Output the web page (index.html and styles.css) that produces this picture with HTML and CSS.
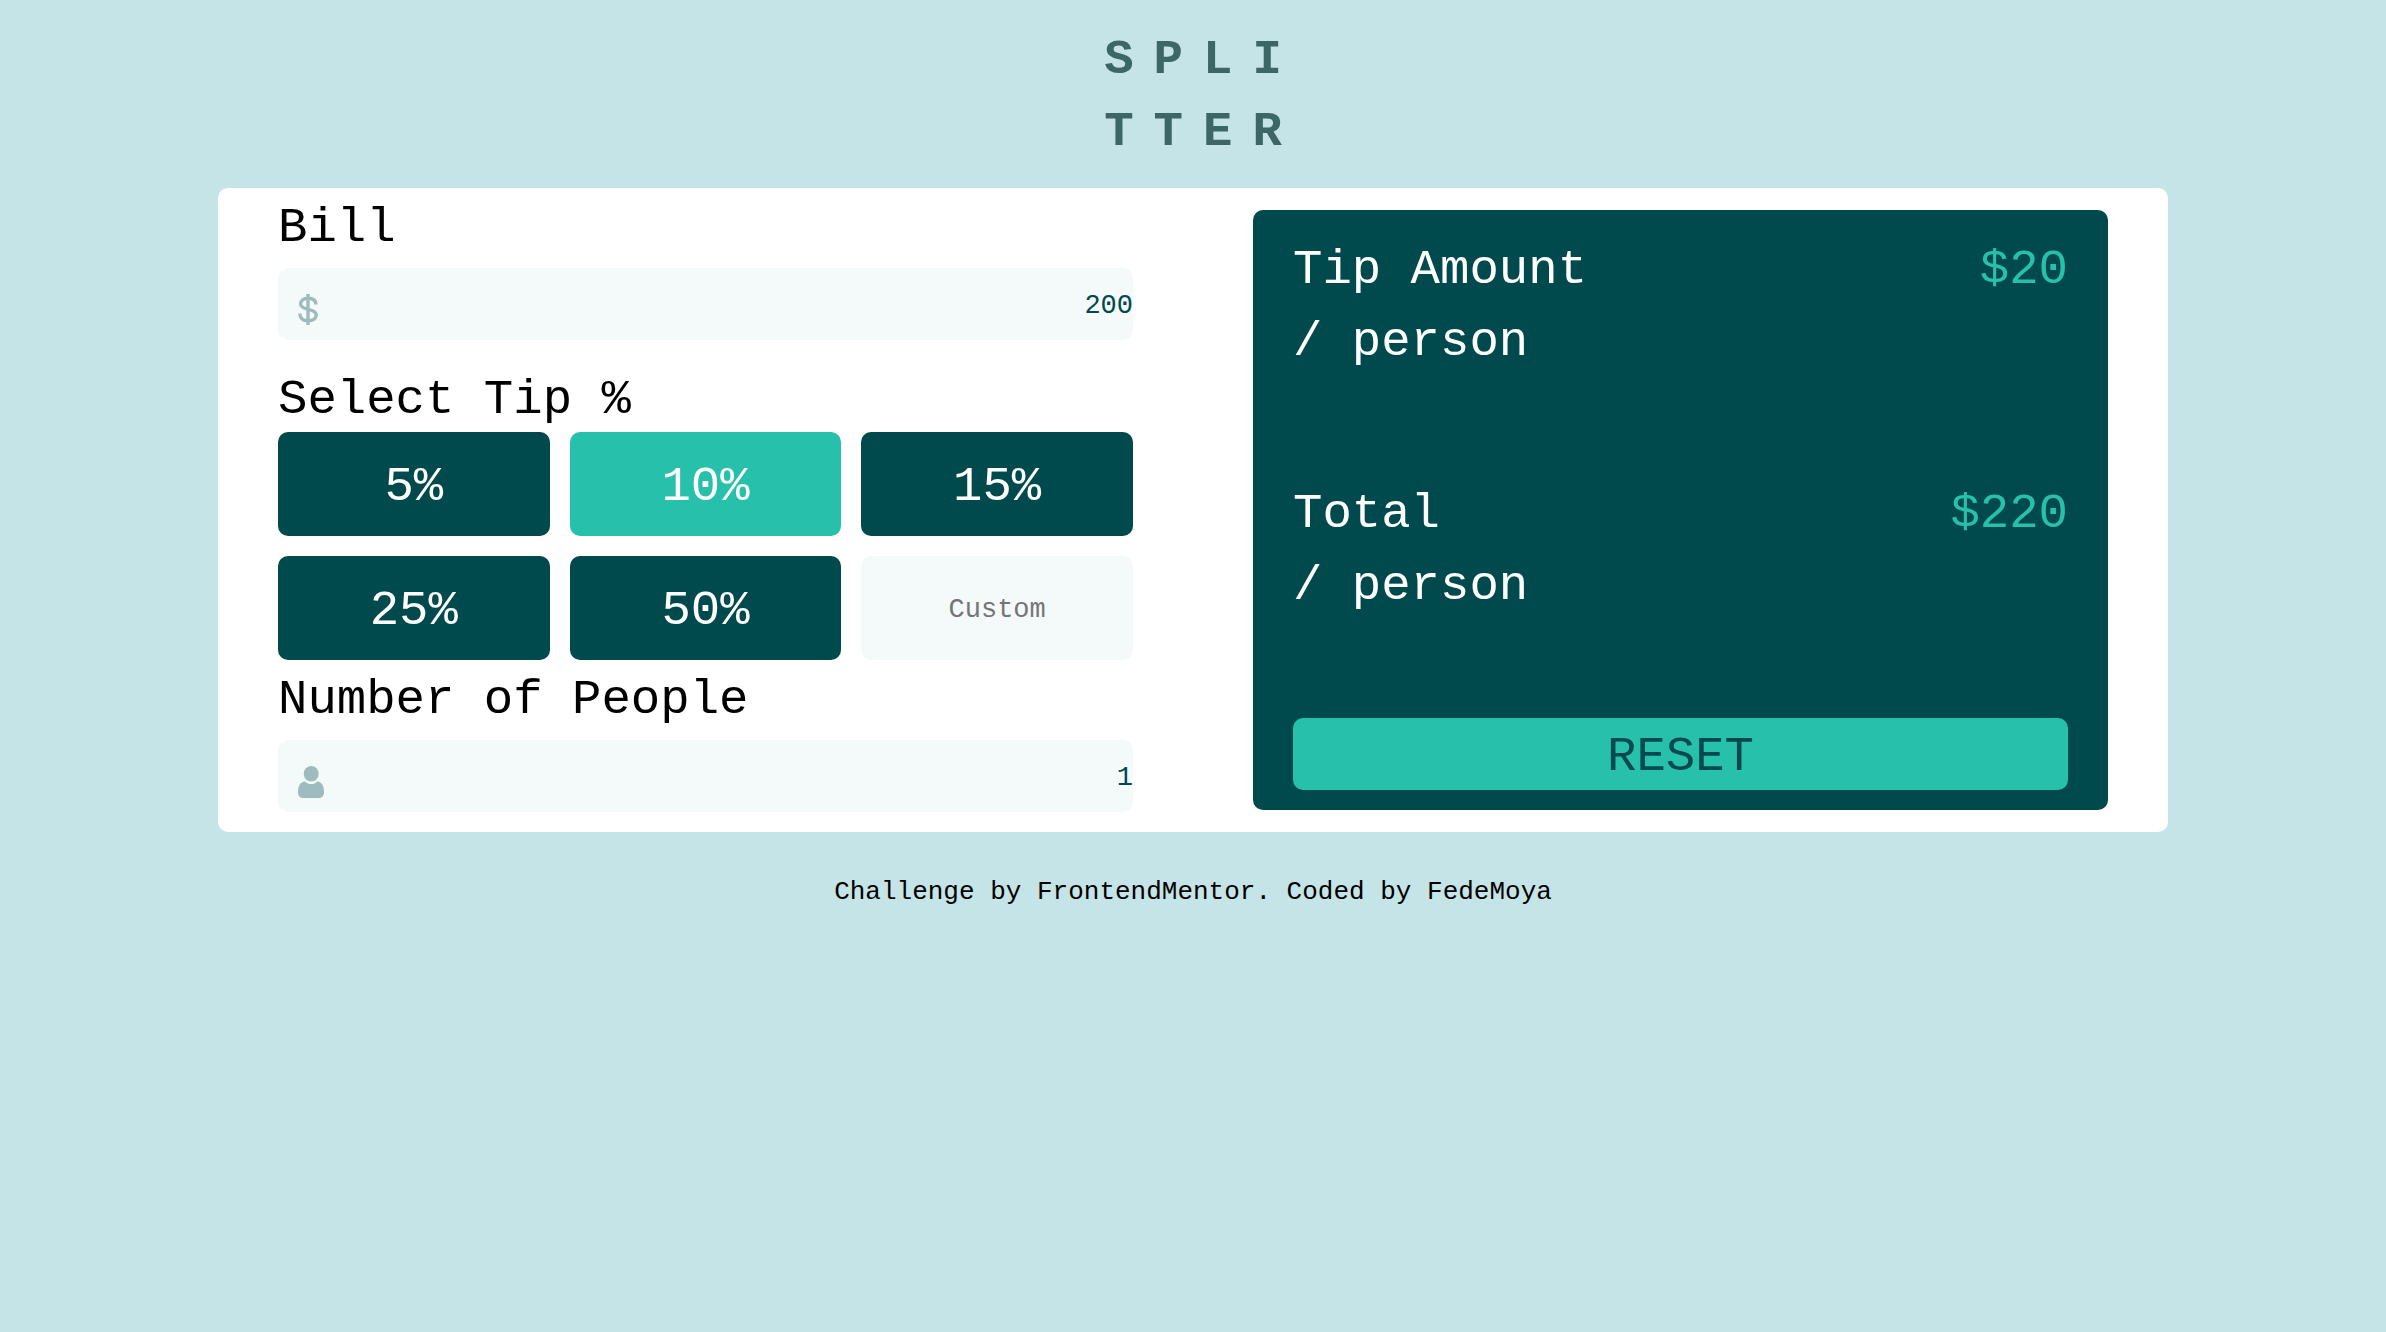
FILE: index.html
```html
<!DOCTYPE html>
<html lang="en">
<head>
<meta charset="utf-8">
<meta name="viewport" content="width=device-width, initial-scale=1">
<title>Splitter</title>
<link rel="stylesheet" href="styles.css">
</head>
<body>
<header class="header">
  <h1 class="logo">SPLI<br>TTER</h1>
</header>
<main class="card">
  <form class="form">
    <label class="label" for="bill">Bill</label>
    <div class="field">
      <svg class="icon" width="20" height="31" viewBox="0 0 20 31" aria-hidden="true"><path d="M10 0v31M18 10.500C17.800 6.500 15 4.300 10.200 4.300 5.500 4.300 2.600 6.600 2.600 9.800c0 3.200 2.400 4.500 7.600 5.500 5.600 1.100 8 2.500 8 5.800 0 3.400-3 5.700-8 5.700-5.200 0-8.300-2.600-8.400-7.300" fill="none" stroke="#9ebbbd" stroke-width="3.400"/></svg>
      <input class="input" id="bill" type="text" inputmode="decimal" value="200">
    </div>
    <fieldset class="tips">
      <legend class="label">Select Tip %</legend>
      <div class="grid">
        <button class="tip" type="button">5%</button>
        <button class="tip tip-active" type="button" aria-pressed="true">10%</button>
        <button class="tip" type="button">15%</button>
        <button class="tip" type="button">25%</button>
        <button class="tip" type="button">50%</button>
        <input class="custom" type="text" inputmode="numeric" placeholder="Custom" aria-label="Custom tip">
      </div>
    </fieldset>
    <label class="label" for="people">Number of People</label>
    <div class="field">
      <svg class="icon" width="26" height="32" viewBox="0 0 26 32" aria-hidden="true"><g fill="#9ebbbd"><ellipse cx="13.200" cy="7.700" rx="7.500" ry="7.700"/><path d="M7 15.500c2 1.800 4 2.600 6.200 2.600s4.300-.8 6.200-2.600c4.300.3 6.600 4.200 6.600 10.500 0 3.800-1.800 6-5 6H5c-3.200 0-5-2.200-5-6 0-6.300 2.600-10.200 7-10.500z"/></g></svg>
      <input class="input" id="people" type="text" inputmode="numeric" value="1">
    </div>
  </form>
  <section class="results">
    <div class="result">
      <p>Tip Amount<br>/ person</p>
      <output class="amount">$20</output>
    </div>
    <div class="result">
      <p>Total<br>/ person</p>
      <output class="amount">$220</output>
    </div>
    <button class="reset" type="button">RESET</button>
  </section>
</main>
<footer class="footer">Challenge by FrontendMentor. Coded by FedeMoya</footer>
</body>
</html>
```
FILE: styles.css
```css
* {
  box-sizing: border-box;
  margin: 0;
}

body {
  background: #c5e4e7;
  color: #000;
  font-family: "Liberation Mono", monospace;
  font-size: 49px;
  line-height: 72px;
}

button,
input {
  border: 0;
  border-radius: 10px;
  font-family: inherit;
}

.header {
  padding: 24px 0 20px 20px;
  display: flex;
  justify-content: center;
}

.logo {
  color: #3d6666;
  font-size: 49px;
  letter-spacing: 20px;
}

.card {
  display: grid;
  grid-template-columns: repeat(auto-fit, minmax(min(100%, 640px), 1fr));
  align-items: center;
  gap: 0 120px;
  max-width: 1950px;
  margin: 0 auto;
  padding: 0 60px;
  border-radius: 10px;
  background: #fff;
}

.form {
  padding-bottom: 20px;
}

.label {
  display: block;
  padding: 8px 0 0;
  line-height: 64px;
}

.field {
  position: relative;
  margin-top: 8px;
}

.icon {
  position: absolute;
  left: 20px;
  top: 26px;
}

.input {
  display: block;
  width: 100%;
  height: 72px;
  padding: 4px 0 0 60px;
  background: #f4fafa;
  color: #00494d;
  font-size: 27px;
  text-align: right;
}

.tips {
  margin-top: 20px;
  padding: 0;
  border: 0;
  min-width: 0;
}

.grid {
  display: grid;
  grid-template-columns: repeat(3, minmax(0, 1fr));
  grid-auto-rows: 104px;
  gap: 20px;
}

.tip {
  padding: 6px 0 0;
  background: #00494d;
  color: #fff;
  font-size: 49px;
}

.tip-active {
  background: #26c0ab;
}

.custom {
  width: 100%;
  padding: 4px 0 0;
  background: #f4fafa;
  color: #00494d;
  font-size: 27px;
  text-align: center;
}

.custom::placeholder {
  color: #757575;
}

.results {
  display: flex;
  flex-direction: column;
  gap: 100px;
  padding: 20px 40px;
  border-radius: 10px;
  background: #00494d;
  color: #fff;
}

.result {
  display: flex;
  justify-content: space-between;
  padding-top: 4px;
  margin-bottom: -4px;
}

.amount {
  color: #26c0ab;
}

.reset {
  height: 72px;
  padding: 6px 0 0;
  background: #26c0ab;
  color: #00494d;
  font-size: 49px;
}

.footer {
  padding: 42px 20px;
  font-size: 26px;
  line-height: 36px;
  text-align: center;
}
```
